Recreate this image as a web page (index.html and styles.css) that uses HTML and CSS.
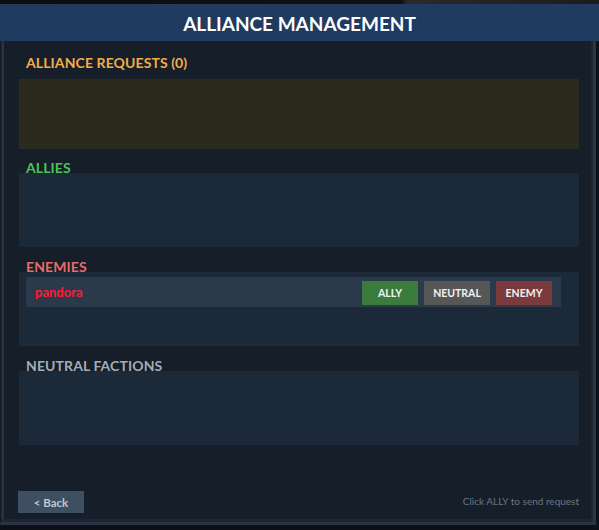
FILE: index.html
```html
<!DOCTYPE html>
<html>
<head>
<meta charset="utf-8">
<link rel="stylesheet" href="styles.css">
</head>
<body>
<div class="topstrip"></div>
<header class="header"><h1 class="title">ALLIANCE MANAGEMENT</h1></header>
<main class="panel">
  <div class="inner">
    <section class="section requests">
      <div class="label label-requests">ALLIANCE REQUESTS (0)</div>
      <div class="box box-requests"></div>
    </section>
    <section class="section">
      <div class="label label-allies">ALLIES</div>
      <div class="box"></div>
    </section>
    <section class="section">
      <div class="label label-enemies">ENEMIES</div>
      <div class="box box-list">
        <div class="row">
          <span class="name">pandora</span>
          <div class="actions">
            <button class="btn btn-ally">ALLY</button>
            <button class="btn btn-neutral">NEUTRAL</button>
            <button class="btn btn-enemy">ENEMY</button>
          </div>
        </div>
      </div>
    </section>
    <section class="section">
      <div class="label label-neutral">NEUTRAL FACTIONS</div>
      <div class="box"></div>
    </section>
    <footer class="footer">
      <button class="back">&lt; Back</button>
      <span class="hint">Click ALLY to send request</span>
    </footer>
  </div>
</main>
</body>
</html>
```
FILE: styles.css
```css
html, body {
  margin: 0;
  padding: 0;
}
body {
  width: 599px;
  height: 530px;
  background: #0d1117;
  font-family: Lato, "Noto Sans", sans-serif;
  overflow: hidden;
}
.topstrip {
  height: 4px;
  background: linear-gradient(90deg, #0b0d10 0%, #0e1013 67%, #2a2a2b 68%, #1b1c1e 100%);
}
.header {
  height: 37px;
  background: #1f3b60;
  display: flex;
  align-items: center;
  justify-content: center;
}
.title {
  margin: 0;
  color: #ffffff;
  font-size: 19px;
  font-weight: 700;
  letter-spacing: 0;
  padding-top: 1px;
}
.panel {
  width: 596px;
  height: 484px;
  background: #1e2533;
  padding: 0 2px 3px 1px;
  box-sizing: border-box;
  border-left: 1px solid #161b25;
  border-right: 3px solid #2b3446;
  border-bottom: 3px solid #2b3446;
}
.inner {
  height: 100%;
  box-sizing: border-box;
  background: #151e29;
  border-left: 2px solid #2b3446;
  padding: 17px 12px 0 15px;
  display: flex;
  flex-direction: column;
}
.section {
  display: flex;
  flex-direction: column;
  margin-bottom: 15px;
}
.section.requests {
  margin-bottom: 14px;
}
.label {
  font-size: 14px;
  font-weight: 700;
  line-height: 10px;
  letter-spacing: 0.1px;
  padding-left: 7px;
}
.label-requests { color: #f2ad48; margin-bottom: 11px; }
.label-allies { color: #4cc456; }
.label-enemies { color: #ea6a6a; }
.label-neutral { color: #a4acb6; }
.box {
  height: 74px;
  background: #1b2939;
}
.box-requests {
  height: 70px;
  background: #2b2b1d;
}
.box-list {
  padding: 5px 18px 0 7px;
  box-sizing: border-box;
}
.row {
  height: 30px;
  background: #2a3a4b;
  display: flex;
  align-items: center;
  justify-content: space-between;
  padding: 0 9px 0 9px;
}
.name {
  color: #ff1a33;
  font-size: 13px;
  font-weight: 700;
  margin-top: -1px;
}
.actions {
  display: flex;
  gap: 5px;
}
.btn {
  border: 0;
  height: 24px;
  padding: 0;
  color: #f2f2f2;
  font-family: Lato, "Noto Sans", sans-serif;
  font-size: 10.5px;
  font-weight: 700;
  margin-top: 1px;
}
.btn-ally { width: 56px; background: #3b7b3e; }
.btn-neutral { width: 66px; background: #575757; margin-left: 1px; }
.btn-enemy { width: 56px; background: #7b3b3c; margin-left: 1px; }
.footer {
  margin-top: auto;
  margin-bottom: 6px;
  margin-left: -1px;
  display: flex;
  align-items: center;
  justify-content: space-between;
}
.back {
  width: 66px;
  height: 22px;
  border: 0;
  background: #3e4f62;
  color: #bcc8d6;
  font-family: Lato, "Noto Sans", sans-serif;
  font-size: 11.5px;
  font-weight: 700;
  padding: 0;
}
.hint {
  color: #6b7685;
  font-size: 10px;
  margin-top: -2px;
}
```
